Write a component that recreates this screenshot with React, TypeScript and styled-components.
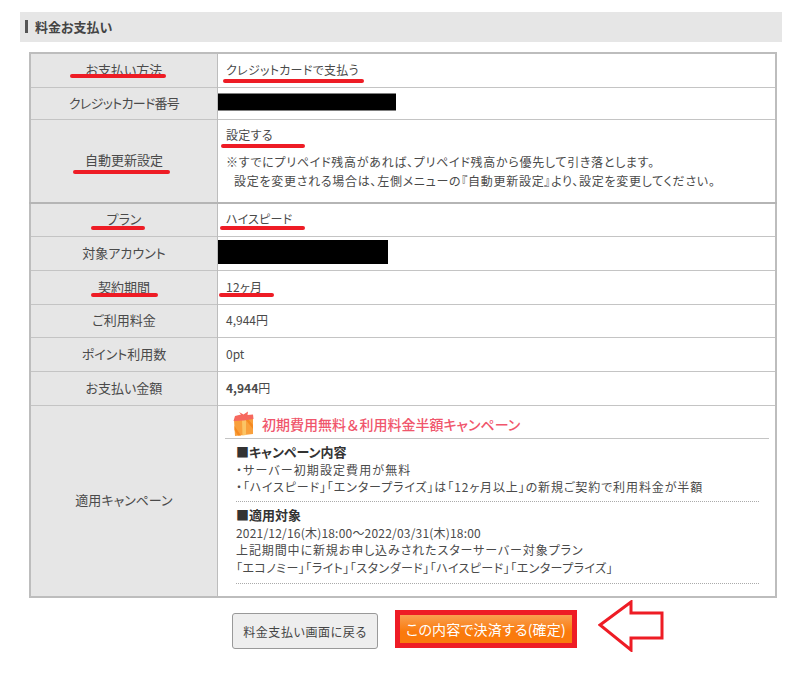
import React from "react";
import styled, { createGlobalStyle } from "styled-components";

const GlobalStyle = createGlobalStyle`
  html, body {
    margin: 0;
    padding: 0;
    background: #fff;
  }
  body {
    font-family: "Noto Sans CJK JP", "Liberation Sans", sans-serif;
    font-feature-settings: "palt";
    font-size: 12px;
    color: #4a4a4a;
  }
`;

const Page = styled.div`
  width: 800px;
  height: 683px;
  padding: 12px 18px 0 20px;
  box-sizing: border-box;
  overflow: hidden;
`;

const SectionTitle = styled.h2`
  display: flex;
  align-items: center;
  gap: 7px;
  height: 30px;
  box-sizing: border-box;
  margin: 0 0 10px;
  padding: 0 0 2px 5px;
  background: #e6e6e6;
  font-size: 13px;
  font-weight: 700;
  color: #444;
  &::before {
    content: "";
    width: 3px;
    height: 13px;
    background: #555;
  }
`;

const Table = styled.table`
  width: 748px;
  margin-left: 9px;
  border-collapse: collapse;
  table-layout: fixed;
  border: 2px solid #bdbdbd;
`;

const Row = styled.tr<{ $height: number; $heavy?: boolean }>`
  height: ${(p) => p.$height}px;
  border-bottom: ${(p) => (p.$heavy ? "2px solid #b5b5b5" : "1px solid #c4c4c4")};
`;

const Label = styled.th<{ $spacing?: number }>`
  position: relative;
  width: 186px;
  padding: 0 0 2px;
  background: #e6e6e6;
  border-right: 1px solid #bdbdbd;
  font-size: 13px;
  font-weight: 400;
  letter-spacing: ${(p) => p.$spacing ?? 0}px;
  text-align: center;
  color: #4a4a4a;
`;

const Value = styled.td`
  position: relative;
  padding: 0 8px 2px;
  background: #fff;
  letter-spacing: 0.3px;
`;

const SettingValue = styled(Value)`
  padding-bottom: 6px;
`;

const Mark = styled.span<{ $left: number; $width: number; $top: number }>`
  position: absolute;
  left: ${(p) => p.$left}px;
  top: ${(p) => p.$top}px;
  width: ${(p) => p.$width}px;
  height: 4px;
  border-radius: 2px;
  background: #ee1c25;
`;

const Redaction = styled.span<{ $width: number; $height: number }>`
  position: absolute;
  left: 0;
  top: 50%;
  width: ${(p) => p.$width}px;
  height: ${(p) => p.$height}px;
  transform: translateY(calc(-50% - 1px));
  background: #000;
`;

const Setting = styled.div`
  margin-bottom: 8px;
  line-height: 18px;
`;

const Note = styled.p<{ $indent?: boolean }>`
  margin: 0;
  padding-left: ${(p) => (p.$indent ? 8 : 0)}px;
  line-height: 19px;
  letter-spacing: 0.72px;
  white-space: nowrap;
`;

const Amount = styled.span`
  letter-spacing: 0;
`;

const Strong = styled.strong`
  font-weight: 700;
`;

const CampaignCell = styled(Value)`
  vertical-align: top;
  padding: 5px 6px 0 7px;
  letter-spacing: 0;
`;

const CampaignHead = styled.div`
  display: flex;
  align-items: center;
  gap: 7px;
  height: 27px;
  padding-left: 7px;
  border-bottom: 1px solid #c4c4c4;
  color: #f0566c;
  font-size: 14px;
  font-weight: 500;
`;

const Amp = styled.span`
  margin: 0 1px;
`;

const CampaignBlock = styled.div<{ $bottom: number }>`
  margin: 0 10px 0 11px;
  padding: 4px 0 ${(p) => p.$bottom}px;
  border-bottom: 1px dotted #aaa;
`;

const BlockTitle = styled.div`
  line-height: 18px;
  font-size: 13px;
  font-weight: 700;
  color: #333;
`;

const BlockLine = styled.div<{ $spacing: number }>`
  line-height: 17.5px;
  letter-spacing: ${(p) => p.$spacing}px;
  white-space: nowrap;
`;

const Actions = styled.div`
  display: flex;
  align-items: flex-start;
  margin-top: 2px;
  padding-left: 212px;
`;

const BackButton = styled.button`
  width: 146px;
  height: 36px;
  margin-top: 13px;
  border: 1px solid #999;
  border-radius: 3px;
  background: #eee;
  font: inherit;
  letter-spacing: 0.6px;
  color: #444;
`;

const PayButton = styled.button`
  width: 182px;
  height: 38px;
  margin: 10px 0 0 17px;
  padding: 0;
  border: 5px solid #ee1c25;
  background: linear-gradient(#f9a050, #fa7a0c 60%);
  font: inherit;
  font-size: 14px;
  letter-spacing: 0.2px;
  color: #fff;
`;

const Arrow = styled.svg`
  margin-left: 21px;
`;

const GiftIcon = () => (
  <svg width="23" height="26" viewBox="0 0 23 26">
    <path d="M2 9 L21 7 V23 L3 25Z" fill="#f9a03c" />
    <path d="M2.5 15 L9 24.5 H6 L2.5 19Z M13 8 L21 18 V14 L16 8Z" fill="#f58a20" />
    <path d="M10 9 L14 8 V24 L10.5 24.5Z" fill="#fbc465" />
    <path d="M1.5 10 L3 5 L9 3.5 L7 1 L11.5 3.5 L16 0.5 L15.5 4 L21 3.5 L21.5 8 L12 9.5Z" fill="#f6685e" />
  </svg>
);

const App = () => (
  <Page>
    <GlobalStyle />
    <SectionTitle>料金お支払い</SectionTitle>
    <Table>
      <tbody>
        <Row $height={34}>
          <Label>
            お支払い方法
            <Mark $left={39} $width={96} $top={20} />
          </Label>
          <Value>
            クレジットカードで支払う
            <Mark $left={5} $width={141} $top={25} />
          </Value>
        </Row>
        <Row $height={32}>
          <Label $spacing={-0.7}>クレジットカード番号</Label>
          <Value>
            <Redaction $width={178} $height={17} />
          </Value>
        </Row>
        <Row $height={84} $heavy>
          <Label>
            自動更新設定
            <Mark $left={42} $width={97} $top={50} />
          </Label>
          <SettingValue>
            <Setting>設定する</Setting>
            <Note>※すでにプリペイド残高があれば、プリペイド残高から優先して引き落とします。</Note>
            <Note $indent>設定を変更される場合は、左側メニューの『自動更新設定』より、設定を変更してください。</Note>
            <Mark $left={3} $width={84} $top={24} />
          </SettingValue>
        </Row>
        <Row $height={33}>
          <Label>
            プラン
            <Mark $left={60} $width={54} $top={22} />
          </Label>
          <Value>
            ハイスピード
            <Mark $left={2} $width={85} $top={22} />
          </Value>
        </Row>
        <Row $height={34}>
          <Label>対象アカウント</Label>
          <Value>
            <Redaction $width={170} $height={24} />
          </Value>
        </Row>
        <Row $height={34}>
          <Label>
            契約期間
            <Mark $left={60} $width={67} $top={22} />
          </Label>
          <Value>
            12ヶ月
            <Mark $left={1} $width={55} $top={22} />
          </Value>
        </Row>
        <Row $height={33}>
          <Label>ご利用料金</Label>
          <Value>
            <Amount>4,944円</Amount>
          </Value>
        </Row>
        <Row $height={34}>
          <Label>ポイント利用数</Label>
          <Value>
            <Amount>0pt</Amount>
          </Value>
        </Row>
        <Row $height={34}>
          <Label>お支払い金額</Label>
          <Value>
            <Amount>
              <Strong>4,944</Strong>円
            </Amount>
          </Value>
        </Row>
        <Row $height={192}>
          <Label>適用キャンペーン</Label>
          <CampaignCell>
            <CampaignHead>
              <GiftIcon />
              <span>
                初期費用無料<Amp>＆</Amp>利用料金半額キャンペーン
              </span>
            </CampaignHead>
            <CampaignBlock $bottom={5}>
              <BlockTitle>■キャンペーン内容</BlockTitle>
              <BlockLine $spacing={1.1}>・サーバー初期設定費用が無料</BlockLine>
              <BlockLine $spacing={0.9}>・「ハイスピード」「エンタープライズ」は「12ヶ月以上」の新規ご契約で利用料金が半額</BlockLine>
            </CampaignBlock>
            <CampaignBlock $bottom={7}>
              <BlockTitle>■適用対象</BlockTitle>
              <BlockLine $spacing={0.2}>2021/12/16(木)18:00～2022/03/31(木)18:00</BlockLine>
              <BlockLine $spacing={0.9}>上記期間中に新規お申し込みされたスターサーバー対象プラン</BlockLine>
              <BlockLine $spacing={0.46}>「エコノミー」「ライト」「スタンダード」「ハイスピード」「エンタープライズ」</BlockLine>
            </CampaignBlock>
          </CampaignCell>
        </Row>
      </tbody>
    </Table>
    <Actions>
      <BackButton>料金支払い画面に戻る</BackButton>
      <PayButton>この内容で決済する(確定)</PayButton>
      <Arrow width="66" height="52" viewBox="0 0 66 52">
        <path
          d="M2 25 L33 2 V13 H64 V38 H33 V50Z"
          fill="#fff"
          stroke="#ee1c25"
          strokeWidth="3"
        />
      </Arrow>
    </Actions>
  </Page>
);

export default App;
